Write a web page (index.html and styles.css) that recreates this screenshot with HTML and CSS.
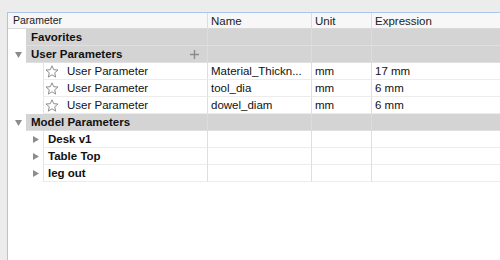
FILE: index.html
```html
<!DOCTYPE html>
<html>
<head>
<meta charset="utf-8">
<link rel="stylesheet" href="styles.css">
</head>
<body>
<div class="window">
  <div class="tree">
    <div class="row header">
      <div class="hc c1">Parameter</div>
      <div class="hc col">Name</div>
      <div class="hc col">Unit</div>
      <div class="hc col">Expression</div>
    </div>

    <div class="row group">
      <div class="c1"><div class="gutter g-top"></div><div class="main bold">Favorites</div></div>
      <div class="col"></div><div class="col"></div><div class="col"></div>
    </div>

    <div class="row group">
      <div class="c1">
        <div class="gutter g-top"><svg class="twisty" width="7" height="6" viewBox="0 0 7 6"><polygon points="0,0 7,0 3.5,6" fill="#8c8c8c"/></svg></div>
        <div class="main bold"><span class="grow">User Parameters</span><svg class="plus" width="9" height="9" viewBox="0 0 9 9"><path d="M4.5 0V9M0 4.5H9" stroke="#8a8a8a" stroke-width="1.4"/></svg></div>
      </div>
      <div class="col"></div><div class="col"></div><div class="col"></div>
    </div>

    <div class="row item">
      <div class="c1"><div class="gutter g-child"></div><div class="main boxed"><svg class="star" width="14" height="13" viewBox="0 0 14 13"><polygon points="7,0.8 8.7,4.7 13,5 9.7,7.8 10.7,12.1 7,9.8 3.3,12.1 4.3,7.8 1,5 5.3,4.7" fill="none" stroke="#8e8e8e" stroke-width="1"/></svg><span>User Parameter</span></div></div>
      <div class="col">Material_Thickn...</div><div class="col">mm</div><div class="col">17 mm</div>
    </div>
    <div class="row item">
      <div class="c1"><div class="gutter g-child"></div><div class="main boxed"><svg class="star" width="14" height="13" viewBox="0 0 14 13"><polygon points="7,0.8 8.7,4.7 13,5 9.7,7.8 10.7,12.1 7,9.8 3.3,12.1 4.3,7.8 1,5 5.3,4.7" fill="none" stroke="#8e8e8e" stroke-width="1"/></svg><span>User Parameter</span></div></div>
      <div class="col">tool_dia</div><div class="col">mm</div><div class="col">6 mm</div>
    </div>
    <div class="row item">
      <div class="c1"><div class="gutter g-child"></div><div class="main boxed"><svg class="star" width="14" height="13" viewBox="0 0 14 13"><polygon points="7,0.8 8.7,4.7 13,5 9.7,7.8 10.7,12.1 7,9.8 3.3,12.1 4.3,7.8 1,5 5.3,4.7" fill="none" stroke="#8e8e8e" stroke-width="1"/></svg><span>User Parameter</span></div></div>
      <div class="col">dowel_diam</div><div class="col">mm</div><div class="col">6 mm</div>
    </div>

    <div class="row group">
      <div class="c1">
        <div class="gutter g-top"><svg class="twisty" width="7" height="6" viewBox="0 0 7 6"><polygon points="0,0 7,0 3.5,6" fill="#8c8c8c"/></svg></div>
        <div class="main bold">Model Parameters</div>
      </div>
      <div class="col"></div><div class="col"></div><div class="col"></div>
    </div>

    <div class="row item">
      <div class="c1"><div class="gutter g-child"><svg class="twisty-r" width="6" height="7" viewBox="0 0 6 7"><polygon points="0,0 6,3.5 0,7" fill="#8c8c8c"/></svg></div><div class="main boxed bold comp">Desk v1</div></div>
      <div class="col"></div><div class="col"></div><div class="col"></div>
    </div>
    <div class="row item">
      <div class="c1"><div class="gutter g-child"><svg class="twisty-r" width="6" height="7" viewBox="0 0 6 7"><polygon points="0,0 6,3.5 0,7" fill="#8c8c8c"/></svg></div><div class="main boxed bold comp">Table Top</div></div>
      <div class="col"></div><div class="col"></div><div class="col"></div>
    </div>
    <div class="row item">
      <div class="c1"><div class="gutter g-child"><svg class="twisty-r" width="6" height="7" viewBox="0 0 6 7"><polygon points="0,0 6,3.5 0,7" fill="#8c8c8c"/></svg></div><div class="main boxed bold comp">leg out</div></div>
      <div class="col"></div><div class="col"></div><div class="col"></div>
    </div>
  </div>
</div>
</body>
</html>
```

FILE: styles.css
```css
* { box-sizing: border-box; }
html, body {
  margin: 0;
  padding: 0;
  background: #ececec;
  width: 500px;
  height: 260px;
  overflow: hidden;
}
.window {
  padding: 12px 0 0 7px;
  height: 260px;
}
.tree {
  height: 248px;
  background: #ffffff;
  border-top: 1px solid #a9c5ea;
  border-left: 1px solid #a9c5ea;
  font-family: "Liberation Sans", Arial, sans-serif;
  color: #111;
}
.row {
  display: grid;
  grid-template-columns: 199px 104px 60px 1fr;
  height: 17px;
}
.header {
  height: 16px;
  background: #f7f7f7;
  border-bottom: 1px solid #d9d9d9;
}
.hc {
  font-size: 10.5px;
  line-height: 15px;
  color: #222;
  padding-left: 5px;
}
.header .col {
  border-left: 1px solid #dedede;
  padding-left: 3px;
}
.c1 {
  display: flex;
  min-width: 0;
}
.gutter {
  flex: none;
  display: flex;
  align-items: center;
  background: #ffffff;
}
.g-top { width: 18px; padding-left: 7px; }
.g-child { width: 35px; padding-left: 25px; }
.main {
  flex: 1;
  min-width: 0;
  display: flex;
  align-items: center;
  font-size: 11.5px;
  height: 17px;
  white-space: nowrap;
}
.bold { font-weight: bold; }
.grow { flex: 1; }
.col {
  border-left: 1px solid #dedede;
  font-size: 11.5px;
  line-height: 16px;
  padding-left: 3px;
  white-space: nowrap;
  overflow: hidden;
}
.group .main, .group .col {
  background: #d4d4d4;
  border-bottom: 1px solid #e0e0e0;
}
.group .main { padding-left: 5px; padding-right: 8px; }
.group .col { border-left-color: #dcdcdc; }
.item .main, .item .col {
  background: #ffffff;
  border-bottom: 1px solid #ececec;
}
.boxed { border-left: 1px solid #e4e4e4; padding-left: 1px; }
.star { margin-right: 8px; flex: none; }
.comp { padding-left: 4px; }
.twisty, .twisty-r { display: block; }
.plus { flex: none; }
```
